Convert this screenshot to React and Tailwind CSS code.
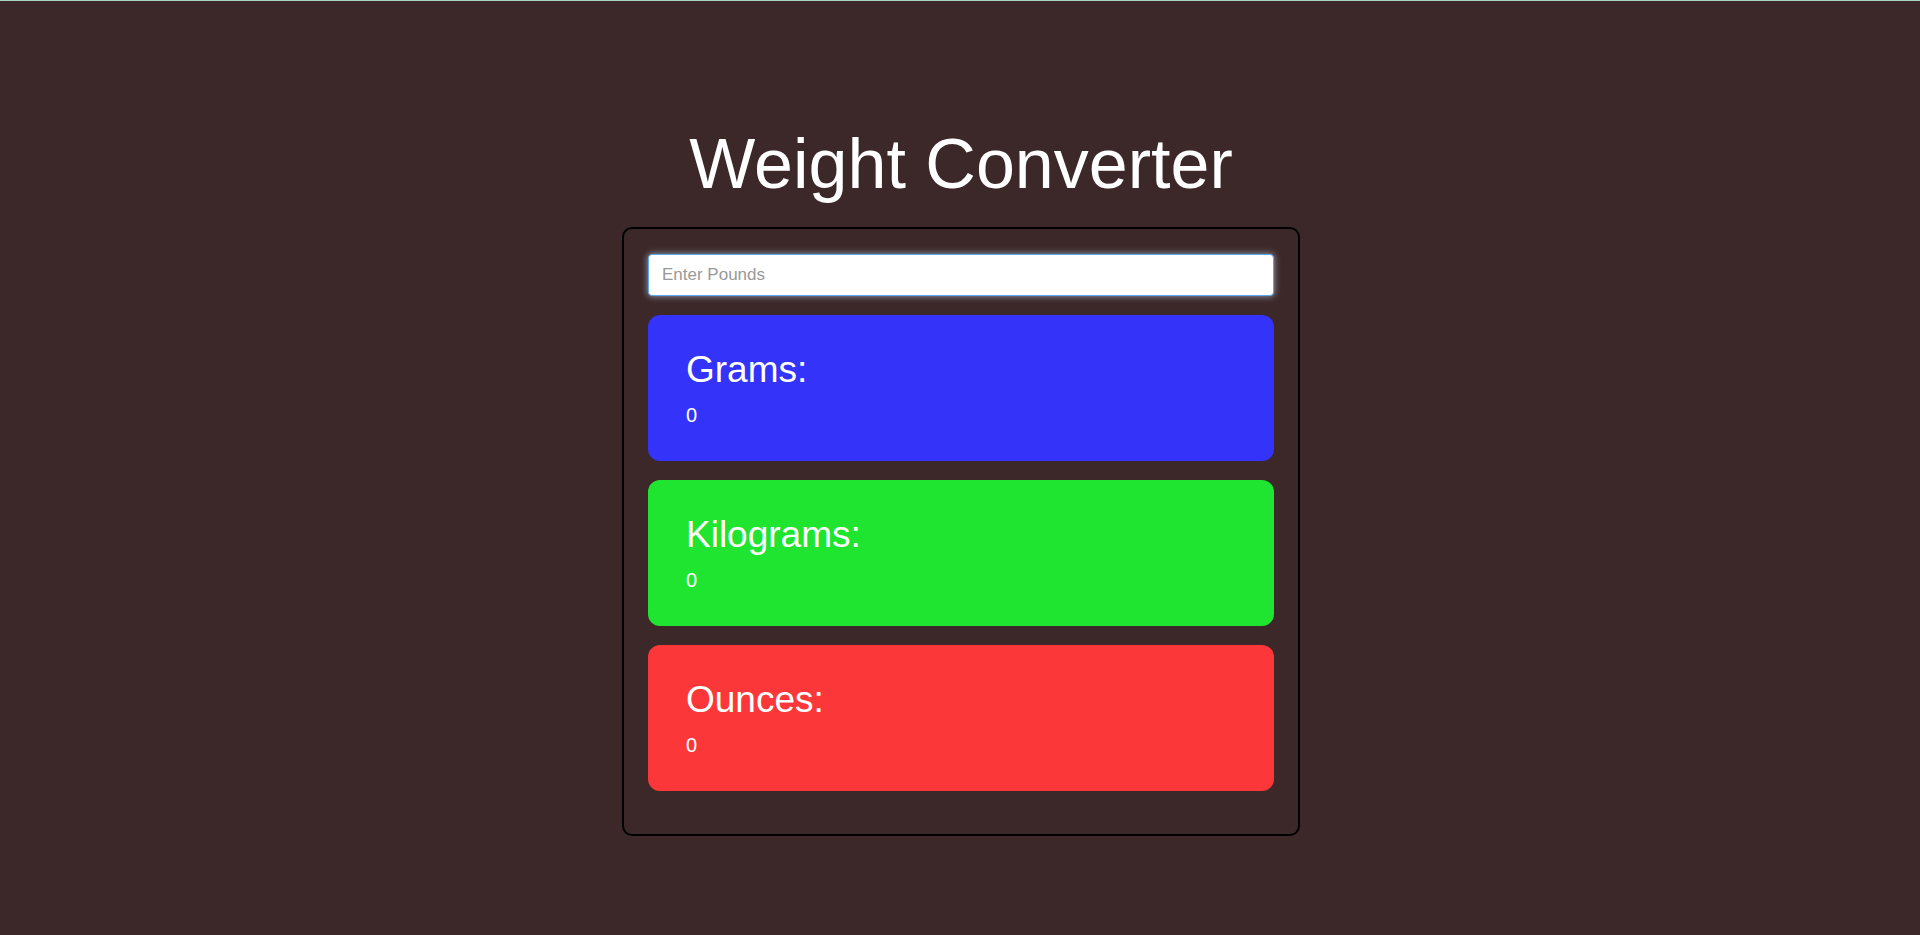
import React, { useState } from "react";

function Card({ label, value, color }) {
  return (
    <div
      className={`${color} rounded-[12px] h-[146px] pl-[38px] pt-[33px] text-white`}
    >
      <h2 className="text-[37px] leading-[43px] font-normal m-0">{label}</h2>
      <p className="text-[20px] leading-[23px] mt-[13px]">{value}</p>
    </div>
  );
}

export default function App() {
  const [lbs, setLbs] = useState("");
  const n = parseFloat(lbs);
  const valid = !isNaN(n);
  const grams = valid ? n / 0.0022046 : 0;
  const kg = valid ? n / 2.2046 : 0;
  const oz = valid ? n * 16 : 0;
  return (
    <div
      className="min-h-[935px] bg-[#3c2828] border-t border-[#a7d3c2] text-white pl-[2px]"
      style={{ fontFamily: '"Liberation Sans", Arial, sans-serif' }}
    >
      <h1 className="text-center text-[70px] leading-[80px] font-normal pt-[123px] mb-[23px]">
        Weight Converter
      </h1>
      <div className="w-[678px] mx-auto border-2 border-black rounded-[10px] pt-[25px] px-[24px] pb-[43px] flex flex-col gap-[19px]">
        <input
          type="text"
          value={lbs}
          onChange={(e) => setLbs(e.target.value)}
          placeholder="Enter Pounds"
          className="h-[42px] w-full bg-white rounded-[4px] border border-[#5aa9ec] shadow-[0_0_7px_rgba(190,210,240,0.75)] pl-[13px] text-[17px] text-black placeholder:text-[#999999] outline-none"
        />
        <Card label="Grams:" value={valid ? grams : 0} color="bg-[#3333fa]" />
        <Card label="Kilograms:" value={valid ? kg : 0} color="bg-[#20e530]" />
        <Card label="Ounces:" value={valid ? oz : 0} color="bg-[#fc3739]" />
      </div>
    </div>
  );
}
